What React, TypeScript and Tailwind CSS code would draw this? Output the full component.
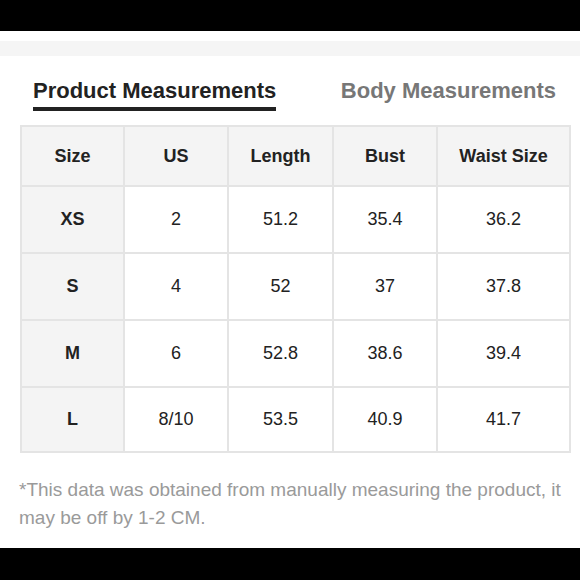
const headers = ["Size", "US", "Length", "Bust", "Waist Size"];

const rows = [
  ["XS", "2", "51.2", "35.4", "36.2"],
  ["S", "4", "52", "37", "37.8"],
  ["M", "6", "52.8", "38.6", "39.4"],
  ["L", "8/10", "53.5", "40.9", "41.7"],
];

export default function App() {
  return (
    <div className="w-[580px] h-[580px] bg-white flex flex-col font-['Liberation_Sans',Arial,sans-serif] text-[#222]">
      <div className="h-[31px] bg-black shrink-0" />
      <div className="h-[10px] shrink-0" />
      <div className="h-[15px] bg-[#f5f5f5] shrink-0" />

      <div className="flex items-start pt-[22px] pl-[33px] pr-[24px] shrink-0">
        <div className="flex flex-col">
          <span className="text-[22px] leading-[26px] font-bold text-[#222]">Product Measurements</span>
          <div className="mt-[3px] h-[4px] bg-[#222]" />
        </div>
        <span className="ml-auto text-[22px] leading-[26px] font-bold text-[#777]">Body Measurements</span>
      </div>

      <div className="ml-[20px] mt-[14px] w-[551px] grid grid-cols-[101px_102px_103px_102px_131px] grid-rows-[58px_65px_65px_65px_63px] gap-[2px] p-[2px] bg-[#e4e4e4] shrink-0">
        {headers.map((h) => (
          <div key={h} className="bg-[#f4f4f4] flex items-center justify-center text-[18px] font-bold">
            {h}
          </div>
        ))}
        {rows.map((r) =>
          r.map((c, i) => (
            <div
              key={r[0] + i}
              className={
                i === 0
                  ? "bg-[#f4f4f4] flex items-center justify-center text-[18px] font-bold"
                  : "bg-white flex items-center justify-center text-[18px]"
              }
            >
              {c}
            </div>
          ))
        )}
      </div>

      <p className="mt-[23px] ml-[19px] w-[545px] text-[19px] leading-[28px] text-[#9a9a9a]">
        *This data was obtained from manually measuring the product, it may be off by 1-2 CM.
      </p>

      <div className="mt-auto h-[32px] bg-black shrink-0" />
    </div>
  );
}
